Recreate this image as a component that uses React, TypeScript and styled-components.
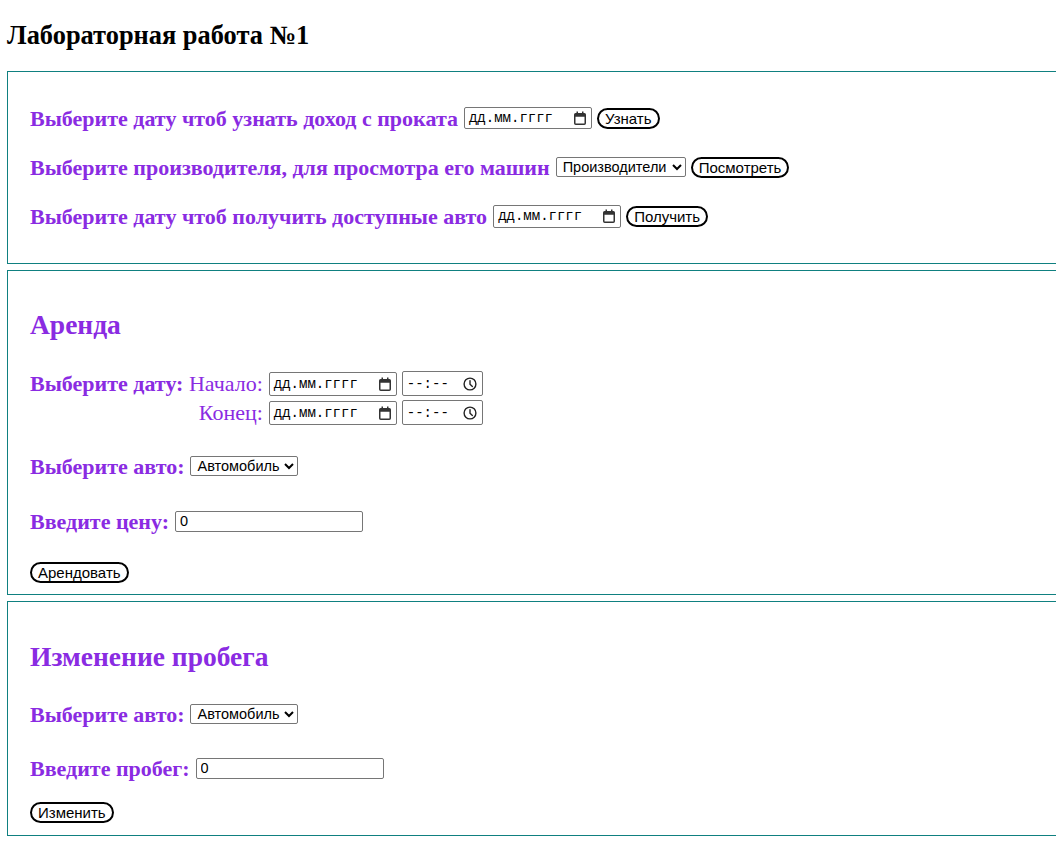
import React from "react";
import styled, { createGlobalStyle } from "styled-components";

const PURPLE = "#8a2be2";

const GlobalStyle = createGlobalStyle`
  html, body { margin: 0; padding: 0; background: #fff; overflow-x: hidden; }
  body { font-family: "Liberation Serif", "Times New Roman", serif; color: #000; }
`;

const Page = styled.div`
  padding: 21px 0 0 7px;
  overflow: hidden;
`;

const Title = styled.h2`
  margin: 0 0 22px;
  height: 28px;
  line-height: 28px;
  font-size: 26.4px;
  font-weight: bold;
  white-space: nowrap;
`;

const Panel = styled.section<{ $pt: number; $pb: number }>`
  border: 1px solid #0f8080;
  margin: 0 -40px 6px 0;
  padding: ${(p) => p.$pt}px 22px ${(p) => p.$pb}px;
  display: flex;
  flex-direction: column;
  align-items: flex-start;
`;

const Heading = styled.h3<{ $mt?: number }>`
  margin: ${(p) => p.$mt ?? 0}px 0 0;
  height: 32px;
  line-height: 32px;
  font-size: 27.5px;
  font-weight: bold;
  color: ${PURPLE};
  white-space: nowrap;
`;

const Row = styled.div<{ $mt?: number; $h?: number }>`
  display: flex;
  align-items: center;
  gap: 5px;
  margin-top: ${(p) => p.$mt ?? 0}px;
  height: ${(p) => p.$h ?? 26}px;
`;

const Label = styled.span`
  color: ${PURPLE};
  font-weight: bold;
  font-size: 22px;
  line-height: 25px;
  white-space: nowrap;
  margin-right: 1px;
`;

const DateGrid = styled.div<{ $mt?: number }>`
  display: grid;
  grid-template-columns: auto auto auto;
  grid-auto-rows: 25px;
  column-gap: 5px;
  row-gap: 4px;
  align-items: center;
  margin-top: ${(p) => p.$mt ?? 0}px;
`;

const GridLabel = styled.div`
  text-align: right;
  color: ${PURPLE};
  font-size: 22px;
  line-height: 25px;
  white-space: nowrap;
  margin-right: 1px;
`;

const Strong = styled.b`
  font-weight: bold;
`;

const FieldBox = styled.div<{ $w: number; $h: number }>`
  display: flex;
  align-items: center;
  justify-content: space-between;
  box-sizing: border-box;
  width: ${(p) => p.$w}px;
  height: ${(p) => p.$h}px;
  border: 1px solid #767676;
  border-radius: 2px;
  padding: 0 5px 0 4px;
  background: #fff;
  font-family: "Liberation Mono", "DejaVu Sans Mono", monospace;
  font-size: 14px;
  color: #000;
`;

const Select = styled.select<{ $w: number }>`
  box-sizing: border-box;
  width: ${(p) => p.$w}px;
  height: 20px;
  font-family: "Liberation Sans", Arial, sans-serif;
  font-size: 14.5px;
  border: 1px solid #767676;
  border-radius: 2px;
  padding: 0 0 0 2px;
  background: #fff;
  color: #000;
`;

const TextInput = styled.input`
  box-sizing: border-box;
  width: 188px;
  height: 21px;
  border: 1px solid #767676;
  border-radius: 2px;
  padding: 0 4px;
  font-family: "Liberation Sans", Arial, sans-serif;
  font-size: 14.5px;
  color: #000;
  background: #fff;
`;

const Button = styled.button`
  box-sizing: border-box;
  height: 21px;
  padding: 0 6px;
  border: 2px solid #000;
  border-radius: 11px;
  background: #fff;
  color: #000;
  font-family: "Liberation Sans", Arial, sans-serif;
  font-size: 15px;
  line-height: 17px;
  white-space: nowrap;
  cursor: pointer;
`;

const CalendarIcon = () => (
  <svg width="12" height="14" viewBox="0 0 12 14" aria-hidden="true">
    <rect x="0.75" y="2.75" width="10.5" height="10.5" rx="1" fill="none" stroke="#333" strokeWidth="1.5" />
    <rect x="0.75" y="2.75" width="10.5" height="3" fill="#333" />
    <rect x="2.5" y="0.5" width="1.5" height="3" fill="#333" />
    <rect x="8" y="0.5" width="1.5" height="3" fill="#333" />
  </svg>
);

const ClockIcon = () => (
  <svg width="14" height="14" viewBox="0 0 14 14" aria-hidden="true">
    <circle cx="7" cy="7" r="5.9" fill="none" stroke="#222" strokeWidth="1.4" />
    <path d="M7 3.6V7.2L9.4 9.4" fill="none" stroke="#222" strokeWidth="1.4" strokeLinecap="round" />
  </svg>
);

const DateField = ({ h }: { h: number }) => (
  <FieldBox $w={128} $h={h}>
    <span>дд.мм.гггг</span>
    <CalendarIcon />
  </FieldBox>
);

const TimeField = ({ h }: { h: number }) => (
  <FieldBox $w={81} $h={h}>
    <span>--:--</span>
    <ClockIcon />
  </FieldBox>
);

export default function App() {
  return (
    <>
      <GlobalStyle />
      <Page>
        <Title>Лабораторная работа №1</Title>

        <Panel $pt={33} $pb={34}>
          <Row>
            <Label>Выберите дату чтоб узнать доход с проката</Label>
            <DateField h={22} />
            <Button>Узнать</Button>
          </Row>
          <Row $mt={23}>
            <Label>Выберите производителя, для просмотра его машин</Label>
            <Select $w={130} defaultValue="m">
              <option value="m">Производители</option>
            </Select>
            <Button>Посмотреть</Button>
          </Row>
          <Row $mt={23}>
            <Label>Выберите дату чтоб получить доступные авто</Label>
            <DateField h={23} />
            <Button>Получить</Button>
          </Row>
        </Panel>

        <Panel $pt={38} $pb={11}>
          <Heading>Аренда</Heading>
          <DateGrid $mt={30}>
            <GridLabel>
              <Strong>Выберите дату:</Strong> Начало:
            </GridLabel>
            <DateField h={24} />
            <TimeField h={25} />
            <GridLabel>Конец:</GridLabel>
            <DateField h={24} />
            <TimeField h={25} />
          </DateGrid>
          <Row $mt={28}>
            <Label>Выберите авто:</Label>
            <Select $w={108} defaultValue="a">
              <option value="a">Автомобиль</option>
            </Select>
          </Row>
          <Row $mt={29}>
            <Label>Введите цену:</Label>
            <TextInput defaultValue="0" />
          </Row>
          <Row $mt={27} $h={22}>
            <Button>Арендовать</Button>
          </Row>
        </Panel>

        <Panel $pt={39} $pb={12}>
          <Heading>Изменение пробега</Heading>
          <Row $mt={28}>
            <Label>Выберите авто:</Label>
            <Select $w={108} defaultValue="a">
              <option value="a">Автомобиль</option>
            </Select>
          </Row>
          <Row $mt={28}>
            <Label>Введите пробег:</Label>
            <TextInput defaultValue="0" />
          </Row>
          <Row $mt={20} $h={22}>
            <Button>Изменить</Button>
          </Row>
        </Panel>
      </Page>
    </>
  );
}
